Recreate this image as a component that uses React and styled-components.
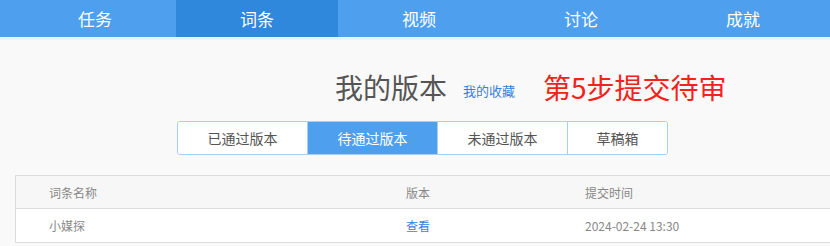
import React from "react";
import styled, { createGlobalStyle } from "styled-components";

const GlobalStyle = createGlobalStyle`
  html, body {
    margin: 0;
    padding: 0;
    background: #f9f9f9;
    font-family: "Microsoft YaHei", "Noto Sans CJK SC", "Liberation Sans", sans-serif;
  }
`;

const Page = styled.div`
  width: 830px;
  height: 246px;
  overflow: hidden;
  background: #f9f9f9;
`;

const NavBar = styled.div`
  display: flex;
  height: 37px;
  padding-left: 14px;
  background: #4ea0ef;
  border-bottom: 3px solid #eaf4fd;
`;

const NavItem = styled.div`
  flex: 0 0 162px;
  display: flex;
  align-items: center;
  justify-content: center;
  font-size: 17px;
  color: #fff;
  background: ${(p) => (p.active ? "#2f88dc" : "transparent")};
`;

const TitleRow = styled.div`
  display: flex;
  align-items: center;
  margin: 29px 0 0 335px;
  height: 36px;
`;

const Title = styled.span`
  font-size: 28px;
  color: #555;
`;

const Fav = styled.a`
  font-size: 13px;
  color: #3d7fd6;
  margin: 6px 28px 0 16px;
  text-decoration: none;
`;

const Step = styled.span`
  font-size: 28px;
  color: #f2231d;
`;

const Tabs = styled.div`
  display: flex;
  width: 489px;
  height: 32px;
  margin: 16px 0 0 177px;
  border: 1px solid #a9cdf3;
  border-radius: 3px;
  overflow: hidden;
  background: #fff;
`;

const Tab = styled.div`
  flex: 0 0 ${(p) => p.w}px;
  display: flex;
  align-items: center;
  justify-content: center;
  font-size: 14px;
  color: ${(p) => (p.active ? "#fff" : "#555")};
  background: ${(p) => (p.active ? "#4ea0ef" : "#fff")};
  & + & {
    border-left: 1px solid #a9cdf3;
  }
`;

const Table = styled.div`
  margin: 20px 0 0 15px;
  border: 1px solid #dcdcdc;
  border-right: none;
  background: #fff;
`;

const Row = styled.div`
  display: grid;
  grid-template-columns: 357px 179px 1fr;
  height: ${(p) => (p.head ? "32px" : "33px")};
  align-items: center;
  padding-left: 33px;
  font-size: 12px;
  color: #888;
  background: ${(p) => (p.head ? "#f7f7f7" : "#fff")};
  border-bottom: ${(p) => (p.head ? "1px solid #dcdcdc" : "none")};
`;

const Link = styled.a`
  color: #3d7fd6;
  text-decoration: none;
`;

const navs = ["任务", "词条", "视频", "讨论", "成就"];
const tabs = [
  { label: "已通过版本", w: 129 },
  { label: "待通过版本", w: 129 },
  { label: "未通过版本", w: 129 },
  { label: "草稿箱", w: 99 },
];

export default function App() {
  return (
    <Page>
      <GlobalStyle />
      <NavBar>
        {navs.map((n) => (
          <NavItem key={n} active={n === "词条"}>
            {n}
          </NavItem>
        ))}
      </NavBar>
      <TitleRow>
        <Title>我的版本</Title>
        <Fav href="#">我的收藏</Fav>
        <Step>第5步提交待审</Step>
      </TitleRow>
      <Tabs>
        {tabs.map((t) => (
          <Tab key={t.label} w={t.w} active={t.label === "待通过版本"}>
            {t.label}
          </Tab>
        ))}
      </Tabs>
      <Table>
        <Row head>
          <span>词条名称</span>
          <span>版本</span>
          <span>提交时间</span>
        </Row>
        <Row>
          <span>小媒探</span>
          <Link href="#">查看</Link>
          <span>2024-02-24 13:30</span>
        </Row>
      </Table>
    </Page>
  );
}
